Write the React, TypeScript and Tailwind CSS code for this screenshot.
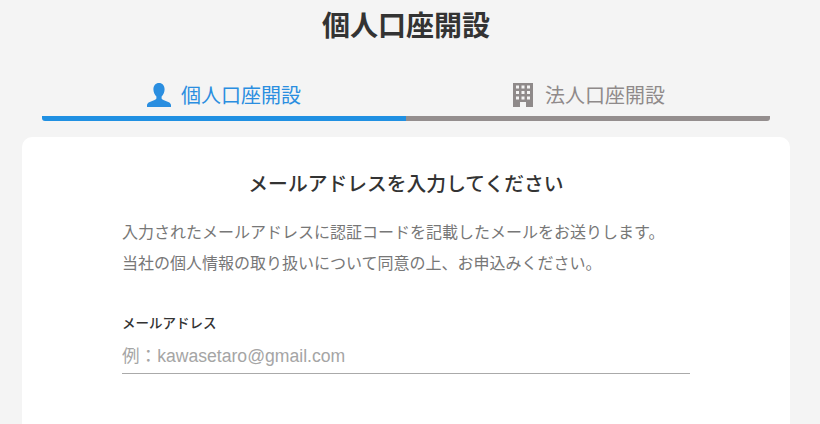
const jp = "font-['Noto_Sans_CJK_JP','Noto_Sans',sans-serif]";

function UserIcon({ className }: { className?: string }) {
  return (
    <svg viewBox="0 0 24 24" className={className} fill="currentColor">
      <path d="M12 0c3.400 0 5.600 2.600 5.600 6.200 0 2.800-1.200 5.600-3 7.200v1.600c0 1 .6 1.500 1.800 2l4.800 1.900c1.800.7 2.800 1.900 2.800 3.400V24H0v-1.700c0-1.500 1-2.700 2.800-3.400L7.600 17c1.200-.5 1.800-1 1.800-2v-1.600c-1.800-1.600-3-4.400-3-7.200C6.400 2.600 8.600 0 12 0z" />
    </svg>
  );
}

function BuildingIcon({ className }: { className?: string }) {
  return (
    <svg viewBox="0 0 20 24" className={className} fill="currentColor">
      <path
        fillRule="evenodd"
        d="M0 0h20v24h-7v-5H7v5H0zM3 2.500v3h3v-3zm5.500 0v3h3v-3zm5.500 0v3h3v-3zM3 8v3h3V8zm5.500 0v3h3V8zM14 8v3h3V8zM3 13.500v3h3v-3zm5.500 0v3h3v-3zm5.500 0v3h3v-3z"
      />
    </svg>
  );
}

export default function App() {
  return (
    <div className={`h-[424px] w-[820px] overflow-hidden bg-[#f4f4f4] ${jp}`}>
      <div className="w-[812px]">
        <h1 className="pt-[4px] text-center text-[28px] leading-[40px] font-bold text-[#333]">
          個人口座開設
        </h1>

        <div className="mx-[42px] mt-[36px] flex">
          <div className="flex-1 rounded-bl-[3px] border-b-[5px] border-[#2090e2] pb-[6px]">
            <div className="flex items-center justify-center gap-[10px] text-[#2a8ee0]">
              <UserIcon className="h-[24px] w-[24px]" />
              <span className="text-[20px] leading-[30px]">個人口座開設</span>
            </div>
          </div>
          <div className="flex-1 rounded-br-[3px] border-b-[5px] border-[#948e8e] pb-[6px]">
            <div className="flex items-center justify-center gap-[12px] pl-[2px] text-[#8f8a8a]">
              <BuildingIcon className="h-[24px] w-[20px]" />
              <span className="text-[20px] leading-[30px]">法人口座開設</span>
            </div>
          </div>
        </div>

        <div className="mx-[22px] mt-[16px] h-[400px] rounded-[10px] bg-white px-[100px] pt-[31px]">
          <h2 className="text-center text-[19.8px] leading-[30px] font-medium text-[#333]">
            メールアドレスを入力してください
          </h2>
          <p className="mt-[18px] text-[16px] leading-[31px] text-[#777]">
            入力されたメールアドレスに認証コードを記載したメールをお送りします。
            <br />
            当社の個人情報の取り扱いについて同意の上、お申込みください。
          </p>
          <label className="mt-[34px] block text-[13.5px] leading-[20px] font-medium text-[#333]">
            メールアドレス
          </label>
          <input
            placeholder="例：kawasetaro@gmail.com"
            className="mt-[8px] block h-[34px] w-[568px] border-b border-[#aaa] font-['Liberation_Sans','Noto_Sans_CJK_JP',sans-serif] text-[17.6px] outline-none placeholder:text-[#a5a5a5]"
          />
        </div>
      </div>
    </div>
  );
}
